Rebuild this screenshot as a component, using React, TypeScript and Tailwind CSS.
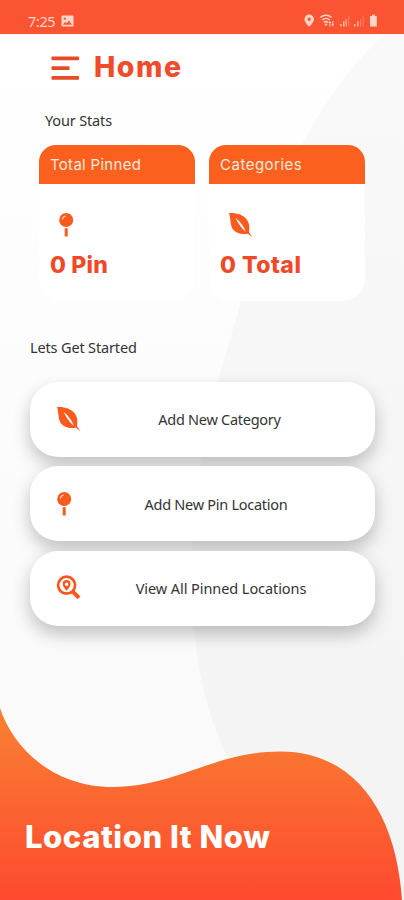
import type { ReactNode } from "react";

const STATS = [
  { title: "Total Pinned", value: "0 Pin", icon: <PinIcon />, titleClass: "tracking-[0.3px]", valueClass: "tracking-[0.2px]" },
  { title: "Categories", value: "0 Total", icon: <LeafIcon />, titleClass: "tracking-[0.5px]", valueClass: "tracking-[0.5px]" },
];

const ACTIONS = [
  { label: "Add New Category", icon: <LeafIcon />, labelClass: "pl-[25px] tracking-[-0.27px]" },
  { label: "Add New Pin Location", icon: <PinIcon />, labelClass: "pl-[18px] tracking-[-0.27px]" },
  { label: "View All Pinned Locations", icon: <SearchPinIcon />, labelClass: "pl-[28px] tracking-[-0.07px]" },
];

function PinIcon() {
  return (
    <svg width="26" height="26" viewBox="0 0 26 26" fill="none">
      <circle cx="8.2" cy="8" r="7" fill="#fa5a1e" />
      <path d="M4.4 7.2C4.7 5.4 5.9 4.3 7.5 4" stroke="#ffd9c7" strokeWidth="1.1" strokeLinecap="round" />
      <path d="M6.700 16.200h3v8.300h-3z" fill="#fa5a1e" />
    </svg>
  );
}

function LeafIcon() {
  return (
    <svg width="26" height="26" viewBox="0 0 26 26" fill="none">
      <path
        d="M1 1C8 .4 15 2.600 18.600 7.200c2.900 3.700 3.200 8.600 2.400 13l3.600 5-4.800-3.500c-6 1.200-12-.2-15-4.400C2 12.900 2.800 6.500 1 1z"
        fill="#fa5a1e"
      />
      <path d="M7.600 5.800c4.500 3.700 8.400 9 10.300 14.200C13.600 16.400 9.800 11.200 7.600 5.800z" fill="#fff" />
    </svg>
  );
}

function SearchPinIcon() {
  return (
    <svg width="26" height="26" viewBox="0 0 26 26" fill="none">
      <circle cx="10.600" cy="10.200" r="8.500" stroke="#f9561d" strokeWidth="2.700" />
      <path d="m16.800 16.600 6.200 6.200" stroke="#f9561d" strokeWidth="4" />
      <path
        d="M10.6 5.1a3.9 3.9 0 0 0-3.9 3.9c0 2.8 3.9 6.7 3.9 6.7s3.9-3.9 3.9-6.7a3.9 3.9 0 0 0-3.9-3.9zm0 2.300a1.800 1.800 0 1 1 0 3.600 1.800 1.800 0 0 1 0-3.600z"
        fill="#f9561d"
        fillRule="evenodd"
      />
    </svg>
  );
}

function StatusBar() {
  return (
    <div className="flex h-[34px] shrink-0 items-start justify-between bg-[#fb5432] pl-7 pr-[25px] pt-[13px] text-[#ffd5c8]">
      <div className="flex items-center gap-[6px]">
        <span className="font-['Noto_Sans'] text-[14.5px] leading-4 tracking-[-0.4px]">7:25</span>
        <svg width="13" height="12" viewBox="0 0 13 12">
          <path
            d="M1.5.5h10a1 1 0 0 1 1 1v9a1 1 0 0 1-1 1h-10a1 1 0 0 1-1-1v-9a1 1 0 0 1 1-1zM2 9.800h9L8 5.600 5.800 8.300 4.300 6.800zM3.800 2.600a1.100 1.100 0 1 0 0 2.200 1.100 1.100 0 0 0 0-2.200z"
            fill="currentColor"
            fillRule="evenodd"
          />
        </svg>
      </div>
      <svg width="76" height="16" viewBox="0 0 76 16" fill="currentColor">
        <path d="M6.200 1.500a4.800 4.800 0 0 0-4.800 4.800c0 3.200 4.800 7.400 4.800 7.400s4.800-4.200 4.800-7.400a4.800 4.800 0 0 0-4.800-4.800zm0 3a1.700 1.700 0 1 1 0 3.400 1.700 1.700 0 0 1 0-3.400z" fillRule="evenodd" />
        <g fill="none" stroke="currentColor" strokeWidth="1.500">
          <path d="M17.300 4.500c3.200-3 8.100-3 11.300 0" />
          <path d="M19.200 7c2.200-2 5.400-2 7.600 0" />
          <path d="M21 9.300c1.200-1 2.800-1 4 0" />
        </g>
        <path d="m23 13-1.800-2.200h3.600zM26.800 8l1.500 2h-1v3.500h-1V10h-1zM29.800 13.500l-1.500-2h1V8h1v3.500h1z" />
        <path d="M37 11h1.500v2.500H37zM40 8.500h1.500v5H40zM42.600 6h1.200v7.500h-1.200z" opacity=".8" />
        <path d="M45.200 3h1v10.500h-1z" opacity=".35" />
        <path d="M51 11h1.500v2.500H51zM54 8.500h1.500v5H54z" opacity=".8" />
        <path d="M57 6h1.100v7.500H57zM59.700 3h1v10.500h-1z" opacity=".35" />
        <path d="M69 1.800h3V3h1.800v10.500H67V3h2z" />
      </svg>
    </div>
  );
}

function ActionButton({ icon, label, labelClass }: { icon: ReactNode; label: string; labelClass: string }) {
  return (
    <button className="grid h-[75px] w-full grid-cols-[26px_1fr_26px] items-center rounded-[28px] bg-white pl-[26px] pr-[17px] shadow-[0_8px_18px_rgba(0,0,0,0.24)]">
      {icon}
      <span className={`whitespace-nowrap text-center text-[14.5px] leading-5 text-[#333] ${labelClass}`}>{label}</span>
    </button>
  );
}

export default function App() {
  return (
    <div className="relative isolate flex h-[900px] w-full flex-col overflow-hidden bg-linear-to-b from-white to-[#f9f9f9] font-['Noto_Sans',sans-serif]">
      {/* Soft curved backdrop */}
      <svg className="absolute inset-0 -z-10" width="404" height="900" viewBox="0 0 404 900">
        <defs>
          <linearGradient id="backdrop" x1="0" y1="0" x2="0" y2="1">
            <stop offset="0" stopColor="#f9f9f9" />
            <stop offset="1" stopColor="#f3f3f3" />
          </linearGradient>
        </defs>
        <path
          d="M385 34C330 80 262 200 240 305 220 375 190 460 192 580 193 660 205 710 228 758L260 900H404V34z"
          fill="url(#backdrop)"
        />
      </svg>

      <StatusBar />

      <header className="flex h-[66px] shrink-0 items-center gap-[15px] pl-[51px]">
        <svg className="mt-[2px]" width="28" height="24" viewBox="0 0 28 24" fill="#e94a25">
          <rect x=".5" y=".5" width="27.500" height="3.800" rx=".7" />
          <rect x=".5" y="10.200" width="18" height="3.800" rx=".7" />
          <rect x=".5" y="20" width="27.500" height="3.800" rx=".7" />
        </svg>
        <h1 className="font-['Inter'] text-[28.5px] font-extrabold leading-9 tracking-[1.5px] text-[#f04b2a]">Home</h1>
      </header>

      <section className="shrink-0 pl-[39px]">
        <h2 className="h-[44.5px] pl-[6px] pt-[10px] text-[14.5px] leading-5 tracking-[-0.15px] text-[#333]">Your Stats</h2>
        <div className="flex gap-[14px]">
          {STATS.map((stat) => (
            <div key={stat.title} className="h-[156px] w-[156px] overflow-hidden rounded-t-[17px] rounded-b-[22px] bg-white font-['Inter']">
              <div className="flex h-[39.5px] items-center bg-[#fb601f] pl-[11px] pt-[2px]">
                <span className={`text-[15px] leading-5 text-[#ffe8dc] ${stat.titleClass}`}>{stat.title}</span>
              </div>
              <div className="pl-[11px] pt-[28px]">
                <div className="pl-[8px]">{stat.icon}</div>
                <p className={`mt-[13px] text-[23px] font-extrabold leading-7 text-[#ee4929] ${stat.valueClass}`}>{stat.value}</p>
              </div>
            </div>
          ))}
        </div>
      </section>

      <section className="shrink-0 pl-[30px] pr-[29px] pt-[36px]">
        <h2 className="text-[14.5px] leading-5 tracking-[-0.15px] text-[#333]">Lets Get Started</h2>
        <div className="mt-[25px] flex flex-col gap-[9.5px]">
          {ACTIONS.map((action) => (
            <ActionButton key={action.label} {...action} />
          ))}
        </div>
      </section>

      {/* Wave footer */}
      <footer className="mt-auto grid h-[192px] shrink-0">
        <svg className="col-start-1 row-start-1" width="404" height="192" viewBox="0 0 404 192">
          <defs>
            <linearGradient id="wave" x1="0" y1="0" x2="0" y2="1">
              <stop offset="0" stopColor="#f98132" />
              <stop offset="1" stopColor="#fe492f" />
            </linearGradient>
          </defs>
          <path d="M0 0C12 37 50 79 113 79 175 79 215 43.500 280 43.500 360 43.500 397 112 402 192H0z" fill="url(#wave)" />
        </svg>
        <p className="col-start-1 row-start-1 pl-[25px] pt-[109px] font-['Inter'] text-[31px] font-extrabold leading-10 tracking-[0.55px] text-white">
          Location It Now
        </p>
      </footer>
    </div>
  );
}
